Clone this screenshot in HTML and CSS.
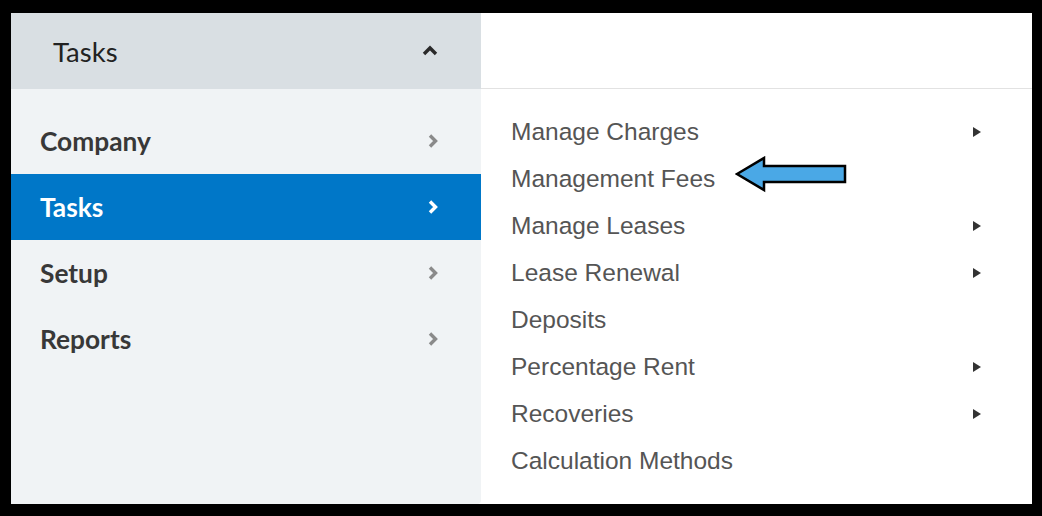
FILE: index.html
```html
<!DOCTYPE html>
<html lang="en">
<head>
    <meta charset="UTF-8">
    <title>Tasks Menu</title>
    <link rel="stylesheet" href="styles.css">
</head>
<body>
    <div class="frame">
        <div class="side">
            <div class="side-header">
                <span>Tasks</span>
                <svg class="caret-up" width="18" height="12" viewBox="0 0 18 12"><path d="M3 10 L9 4 L15 10" fill="none" stroke="#2a2a2a" stroke-width="3.4"/></svg>
            </div>
            <ul class="nav">
                <li class="nav-item"><span>Company</span><svg class="chev" width="12" height="16" viewBox="0 0 12 16"><path d="M3 2.5 L8.5 8 L3 13.5" fill="none" stroke="currentColor" stroke-width="3.4"/></svg></li>
                <li class="nav-item active"><span>Tasks</span><svg class="chev" width="12" height="16" viewBox="0 0 12 16"><path d="M3 2.5 L8.5 8 L3 13.5" fill="none" stroke="currentColor" stroke-width="3.4"/></svg></li>
                <li class="nav-item"><span>Setup</span><svg class="chev" width="12" height="16" viewBox="0 0 12 16"><path d="M3 2.5 L8.5 8 L3 13.5" fill="none" stroke="currentColor" stroke-width="3.4"/></svg></li>
                <li class="nav-item"><span>Reports</span><svg class="chev" width="12" height="16" viewBox="0 0 12 16"><path d="M3 2.5 L8.5 8 L3 13.5" fill="none" stroke="currentColor" stroke-width="3.4"/></svg></li>
            </ul>
        </div>
        <div class="main">
            <div class="main-header"></div>
            <ul class="submenu">
                <li class="sub-item"><span>Manage Charges</span><i class="tri"></i></li>
                <li class="sub-item">
                    <span>Management Fees</span>
                    <svg class="pointer" width="112" height="38" viewBox="0 0 112 38">
                        <path d="M2 18 L29 2 L29 10 L110 10 L110 26 L29 26 L29 34 Z" fill="#4aa8e6" stroke="#000" stroke-width="2.5" stroke-linejoin="miter"/>
                    </svg>
                </li>
                <li class="sub-item"><span>Manage Leases</span><i class="tri"></i></li>
                <li class="sub-item"><span>Lease Renewal</span><i class="tri"></i></li>
                <li class="sub-item"><span>Deposits</span></li>
                <li class="sub-item"><span>Percentage Rent</span><i class="tri"></i></li>
                <li class="sub-item"><span>Recoveries</span><i class="tri"></i></li>
                <li class="sub-item"><span>Calculation Methods</span></li>
            </ul>
        </div>
    </div>
</body>
</html>
```

FILE: styles.css
```css
body {
    margin: 0;
    background-color: #000;
}

.frame {
    box-sizing: border-box;
    width: 1042px;
    height: 516px;
    border-style: solid;
    border-color: #000;
    border-width: 13px 10px 12px 11px;
    display: grid;
    grid-template-columns: 470px 1fr;
    background-color: #fff;
}

ul {
    list-style: none;
    margin: 0;
    padding: 0;
}

.side {
    display: flex;
    flex-direction: column;
    background-color: #f0f3f5;
    border-bottom-right-radius: 4px;
}

.side-header {
    height: 76px;
    display: flex;
    align-items: center;
    justify-content: space-between;
    padding: 0 42px 0 42px;
    background-color: #d9dfe3;
    font-family: Lato, sans-serif;
    font-size: 27.5px;
    color: #222;
}

.caret-up {
    margin-top: -3px;
}

.nav {
    padding-top: 19px;
}

.nav-item {
    height: 66px;
    display: flex;
    align-items: center;
    justify-content: space-between;
    padding: 0 42px 0 29px;
    font-family: Lato, sans-serif;
    font-weight: 700;
    font-size: 26.3px;
    color: #383838;
}

.nav-item .chev {
    color: #8a8a8a;
}

.nav-item.active {
    background-color: #0077c8;
    color: #fff;
}

.nav-item.active .chev {
    color: #fff;
}

.main {
    display: flex;
    flex-direction: column;
}

.main-header {
    height: 75px;
    border-bottom: 1px solid #e2e2e2;
}

.submenu {
    padding: 19px 0 0 30px;
}

.sub-item {
    height: 47px;
    display: flex;
    align-items: center;
    padding-right: 51px;
    font-family: "Liberation Sans", Arial, sans-serif;
    font-size: 24.5px;
    color: #555;
}

.sub-item span {
    flex: 1;
}

.sub-item:has(.pointer) span {
    flex: none;
}

.tri {
    width: 0;
    height: 0;
    border-top: 5px solid transparent;
    border-bottom: 5px solid transparent;
    border-left: 8px solid #333;
}

.pointer {
    margin-left: 20px;
    margin-top: -8px;
}
```
